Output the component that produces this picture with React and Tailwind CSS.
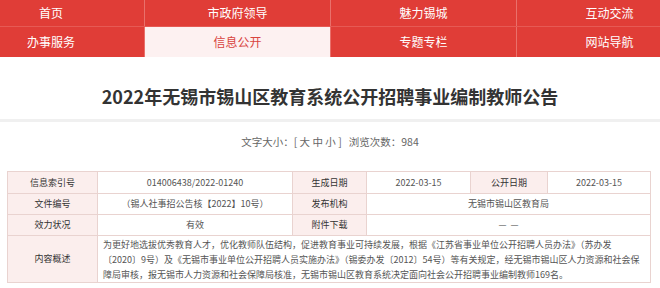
import React from "react";

const navTop = ["首页", "市政府领导", "魅力锡城", "互动交流"];
const navBottom = ["办事服务", "信息公开", "专题专栏", "网站导航"];

const Label = ({ children, className = "" }) => (
  <td
    className={`border border-[#e9d3d0] bg-[#fbeeed] text-center text-[#333] ${className}`}
  >
    {children}
  </td>
);

const Value = ({ children, colSpan, className = "" }) => (
  <td
    colSpan={colSpan}
    className={`border border-[#e9d3d0] bg-white text-center text-[#555] ${className}`}
  >
    {children}
  </td>
);

const App = () => {
  return (
    <div className="w-[660px] h-[288px] overflow-hidden bg-white font-['Noto_Sans_CJK_SC',sans-serif]">
      {/* nav */}
      <div className="w-full overflow-hidden bg-[#e03d37]">
        <div className="ml-[-42px] w-[744px]">
          <div className="grid grid-cols-4 h-[27px] border-b border-[#e65a54]">
            {navTop.map((t, i) => (
              <div
                key={t}
                className={`flex items-center justify-center text-[12px] text-white ${
                  i > 0 ? "border-l border-[#e9706b]" : ""
                }`}
              >
                {t}
              </div>
            ))}
          </div>
          <div className="grid grid-cols-4 h-[30px]">
            {navBottom.map((t, i) => (
              <div
                key={t}
                className={`flex items-center justify-center text-[12px] ${
                  i > 0 ? "border-l border-[#e9706b]" : ""
                } ${i === 1 ? "bg-[#fdf1f1] text-[#d9453f]" : "text-white"}`}
              >
                {t}
              </div>
            ))}
          </div>
        </div>
      </div>

      {/* title */}
      <h1 className="mt-[28px] text-center text-[18px] leading-[22px] font-bold text-[#333]">
        2022年无锡市锡山区教育系统公开招聘事业编制教师公告
      </h1>
      <div className="mt-[12px] h-[3px] bg-[#f0f0f0]" />
      <div className="mt-[13px] text-center text-[10.5px] leading-[14px] text-[#666]">
        文字大小：[ 大 中 小 ]&nbsp;&nbsp;&nbsp;浏览次数：984
      </div>

      {/* info table */}
      <table className="mt-[22px] ml-[7px] w-[643px] border-collapse table-fixed text-[9px]">
        <colgroup>
          <col className="w-[90px]" />
          <col className="w-[195px]" />
          <col className="w-[74px]" />
          <col className="w-[104px]" />
          <col className="w-[77px]" />
          <col className="w-[103px]" />
        </colgroup>
        <tbody>
          <tr className="h-[22px]">
            <Label>信息索引号</Label>
            <Value>014006438/2022-01240</Value>
            <Label>生成日期</Label>
            <Value>2022-03-15</Value>
            <Label>公开日期</Label>
            <Value>2022-03-15</Value>
          </tr>
          <tr className="h-[21px]">
            <Label>文件编号</Label>
            <Value>（锡人社事招公告核【2022】10号）</Value>
            <Label>发布机构</Label>
            <Value colSpan={3}>无锡市锡山区教育局</Value>
          </tr>
          <tr className="h-[21px]">
            <Label>效力状况</Label>
            <Value>有效</Value>
            <Label>附件下载</Label>
            <Value colSpan={3}>—&nbsp;&nbsp;—</Value>
          </tr>
          <tr className="h-[47px]">
            <Label>内容概述</Label>
            <Value colSpan={5} className="!text-left pl-[5px] leading-[15px] whitespace-nowrap">
              为更好地选拔优秀教育人才，优化教师队伍结构，促进教育事业可持续发展，根据《江苏省事业单位公开招聘人员办法》（苏办发
              <br />
              〔2020〕9号）及《无锡市事业单位公开招聘人员实施办法》（锡委办发〔2012〕54号）等有关规定，经无锡市锡山区人力资源和社会保
              <br />
              障局审核，报无锡市人力资源和社会保障局核准，无锡市锡山区教育系统决定面向社会公开招聘事业编制教师169名。
            </Value>
          </tr>
        </tbody>
      </table>
    </div>
  );
};

export default App;
